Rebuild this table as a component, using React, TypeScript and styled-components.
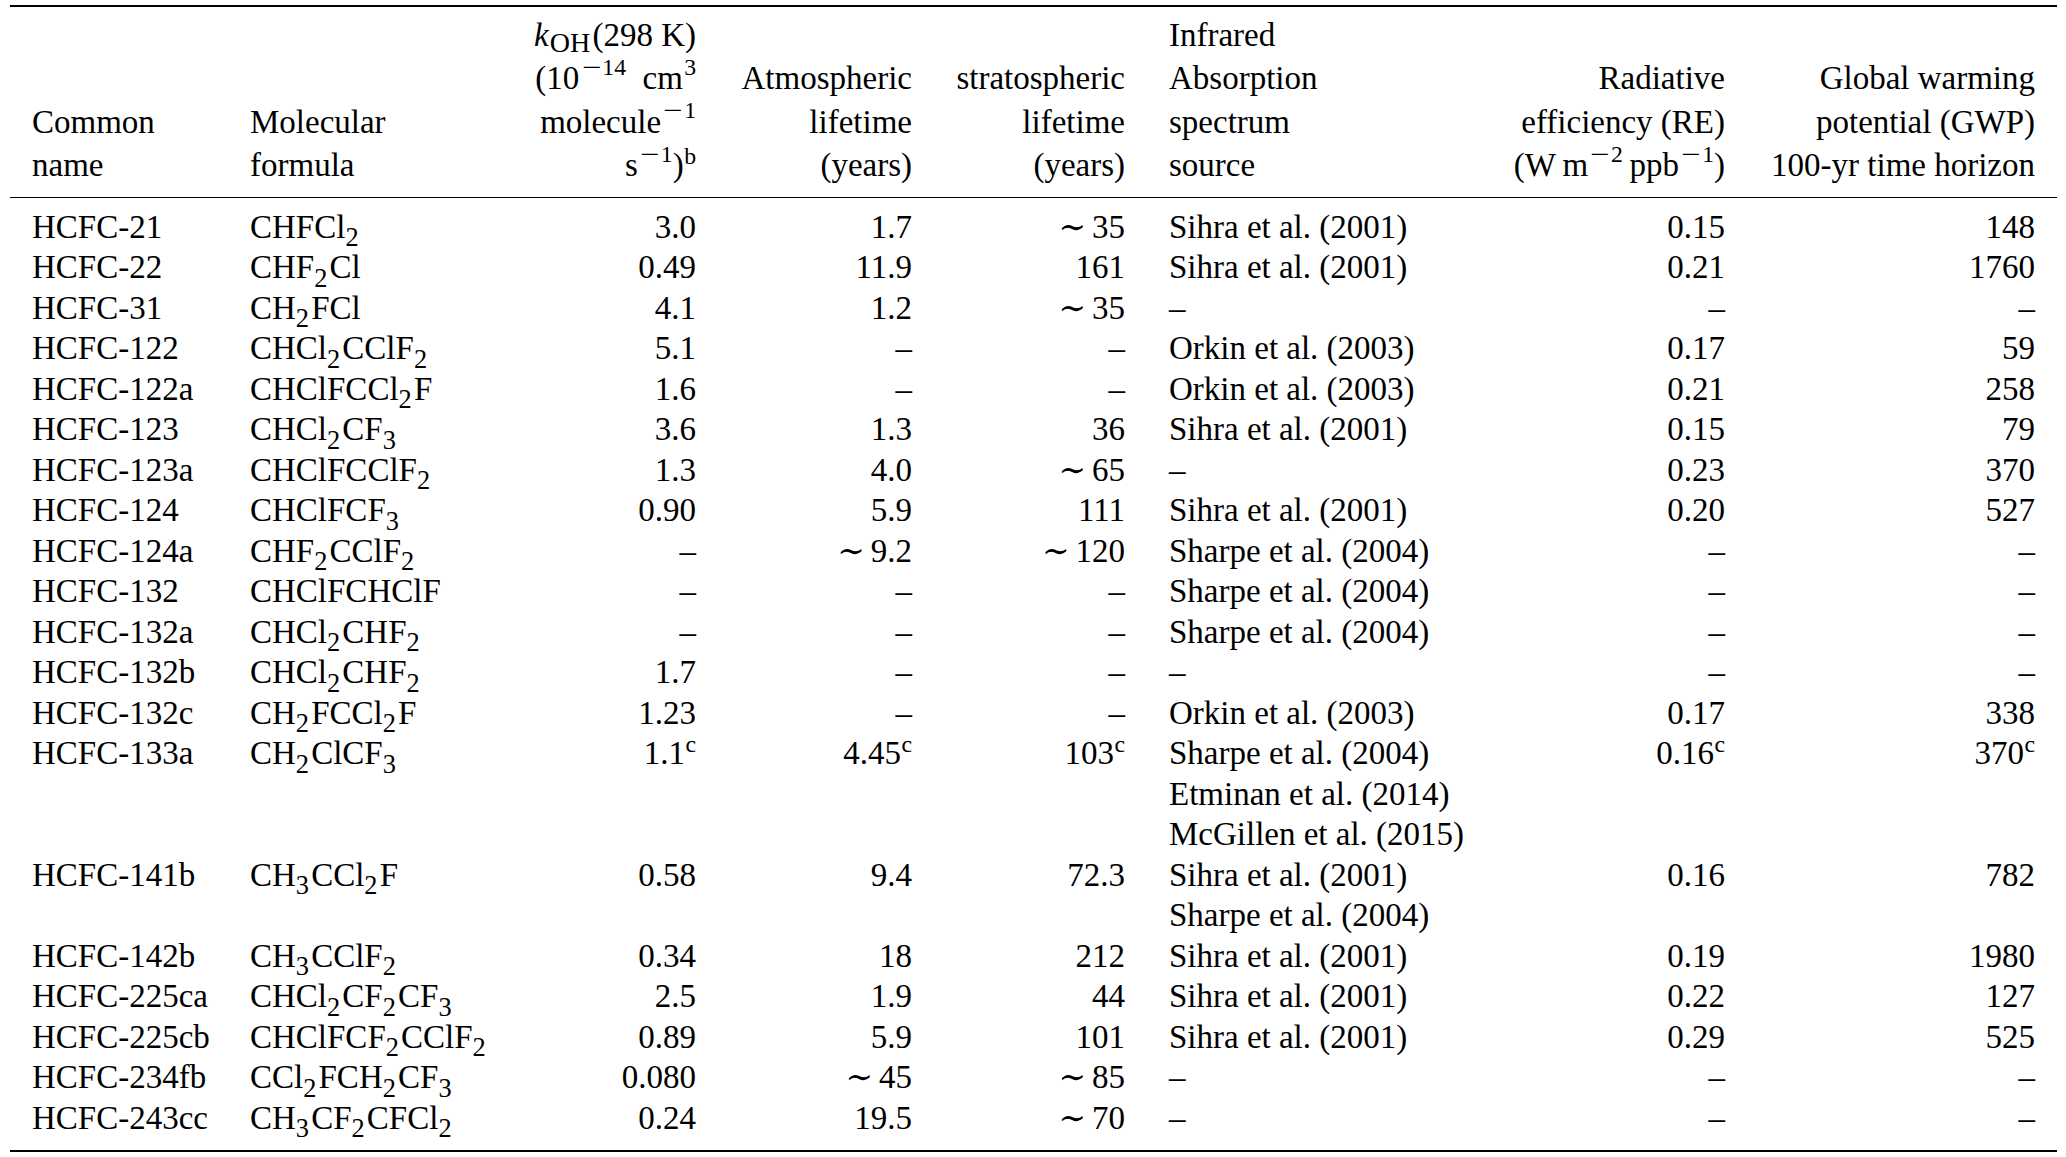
import React from "react";
import styled, { createGlobalStyle } from "styled-components";

const Global = createGlobalStyle`
  html, body { margin: 0; padding: 0; background: #ffffff; }
  body {
    font-family: "Liberation Serif", "Times New Roman", "DejaVu Serif", serif;
    color: #000;
  }
`;

type Align = "left" | "right";

const Table = styled.table`
  margin: 5px 0 0 10px;
  width: 2047px;
  table-layout: fixed;
  border-collapse: separate;
  border-spacing: 0;
  border-top: 2px solid #000;
  border-bottom: 2px solid #000;
  font-size: 33px;
`;

const Col = styled.col<{ $w: number }>`
  width: ${(p) => p.$w}px;
`;

const Th = styled.th<{ $align: Align }>`
  font-weight: normal;
  vertical-align: bottom;
  text-align: ${(p) => p.$align};
  line-height: 43.5px;
  white-space: nowrap;
  padding: 6.6px ${(p) => (p.$align === "right" ? "22px" : "0")} 9.4px
    ${(p) => (p.$align === "left" ? "22px" : "0")};
  border-bottom: 1px solid #000;
`;

const HeadLine = styled.div`
  display: block;
`;

const Td = styled.td<{ $align: Align }>`
  vertical-align: top;
  text-align: ${(p) => p.$align};
  line-height: 40.5px;
  white-space: nowrap;
  padding: 0 ${(p) => (p.$align === "right" ? "22px" : "0")} 0
    ${(p) => (p.$align === "left" ? "22px" : "0")};
  tr:first-child > & {
    padding-top: 8.6px;
  }
  tr:last-child > & {
    padding-bottom: 11.9px;
  }
`;

const SourceLine = styled.div`
  display: block;
`;

const Sub = styled.sub`
  font-size: 0.8em;
  line-height: 0;
  vertical-align: -0.32em;
  margin-right: 0.08em;
`;

const IndexSub = styled.sub`
  font-size: 0.85em;
  line-height: 0;
  vertical-align: -0.24em;
  margin: 0 0.08em 0 0.04em;
`;

const Sup = styled.sup`
  font-size: 0.72em;
  line-height: 0;
  vertical-align: 0.6em;
  margin-left: 0.05em;
`;

const Minus = styled.span`
  display: inline-block;
  width: 0.92em;
  text-align: center;
  transform: scaleX(1.45);
`;

const Note = styled.sup`
  font-size: 0.72em;
  line-height: 0;
  vertical-align: 0.52em;
  margin-left: 0.02em;
`;

const Tilde = styled.span`
  margin-right: 0.18em;
`;

const Ital = styled.i`
  font-style: italic;
`;

type Row = {
  name: string;
  formula: string;
  k: string;
  atm: string;
  strat: string;
  sources: string[];
  re: string;
  gwp: string;
};

const DASH = "\u2013";
const S01 = "Sihra et al. (2001)";
const O03 = "Orkin et al. (2003)";
const S04 = "Sharpe et al. (2004)";

const rows: Row[] = [
  { name: "HCFC-21", formula: "CHFCl2", k: "3.0", atm: "1.7", strat: "~35", sources: [S01], re: "0.15", gwp: "148" },
  { name: "HCFC-22", formula: "CHF2Cl", k: "0.49", atm: "11.9", strat: "161", sources: [S01], re: "0.21", gwp: "1760" },
  { name: "HCFC-31", formula: "CH2FCl", k: "4.1", atm: "1.2", strat: "~35", sources: [DASH], re: DASH, gwp: DASH },
  { name: "HCFC-122", formula: "CHCl2CClF2", k: "5.1", atm: DASH, strat: DASH, sources: [O03], re: "0.17", gwp: "59" },
  { name: "HCFC-122a", formula: "CHClFCCl2F", k: "1.6", atm: DASH, strat: DASH, sources: [O03], re: "0.21", gwp: "258" },
  { name: "HCFC-123", formula: "CHCl2CF3", k: "3.6", atm: "1.3", strat: "36", sources: [S01], re: "0.15", gwp: "79" },
  { name: "HCFC-123a", formula: "CHClFCClF2", k: "1.3", atm: "4.0", strat: "~65", sources: [DASH], re: "0.23", gwp: "370" },
  { name: "HCFC-124", formula: "CHClFCF3", k: "0.90", atm: "5.9", strat: "111", sources: [S01], re: "0.20", gwp: "527" },
  { name: "HCFC-124a", formula: "CHF2CClF2", k: DASH, atm: "~9.2", strat: "~120", sources: [S04], re: DASH, gwp: DASH },
  { name: "HCFC-132", formula: "CHClFCHClF", k: DASH, atm: DASH, strat: DASH, sources: [S04], re: DASH, gwp: DASH },
  { name: "HCFC-132a", formula: "CHCl2CHF2", k: DASH, atm: DASH, strat: DASH, sources: [S04], re: DASH, gwp: DASH },
  { name: "HCFC-132b", formula: "CHCl2CHF2", k: "1.7", atm: DASH, strat: DASH, sources: [DASH], re: DASH, gwp: DASH },
  { name: "HCFC-132c", formula: "CH2FCCl2F", k: "1.23", atm: DASH, strat: DASH, sources: [O03], re: "0.17", gwp: "338" },
  {
    name: "HCFC-133a",
    formula: "CH2ClCF3",
    k: "1.1^c",
    atm: "4.45^c",
    strat: "103^c",
    sources: [S04, "Etminan et al. (2014)", "McGillen et al. (2015)"],
    re: "0.16^c",
    gwp: "370^c",
  },
  { name: "HCFC-141b", formula: "CH3CCl2F", k: "0.58", atm: "9.4", strat: "72.3", sources: [S01, S04], re: "0.16", gwp: "782" },
  { name: "HCFC-142b", formula: "CH3CClF2", k: "0.34", atm: "18", strat: "212", sources: [S01], re: "0.19", gwp: "1980" },
  { name: "HCFC-225ca", formula: "CHCl2CF2CF3", k: "2.5", atm: "1.9", strat: "44", sources: [S01], re: "0.22", gwp: "127" },
  { name: "HCFC-225cb", formula: "CHClFCF2CClF2", k: "0.89", atm: "5.9", strat: "101", sources: [S01], re: "0.29", gwp: "525" },
  { name: "HCFC-234fb", formula: "CCl2FCH2CF3", k: "0.080", atm: "~45", strat: "~85", sources: [DASH], re: DASH, gwp: DASH },
  { name: "HCFC-243cc", formula: "CH3CF2CFCl2", k: "0.24", atm: "19.5", strat: "~70", sources: [DASH], re: DASH, gwp: DASH },
];

const colWidths = [218, 272, 218, 216, 213, 343, 257, 310];

function Formula({ text }: { text: string }) {
  const parts = text.split(/(\d+)/).filter((s) => s.length > 0);
  return (
    <>
      {parts.map((p, i) => (/^\d+$/.test(p) ? <Sub key={i}>{p}</Sub> : <React.Fragment key={i}>{p}</React.Fragment>))}
    </>
  );
}

function Power({ n }: { n: string }) {
  const neg = n.startsWith("-");
  return (
    <Sup>
      {neg && <Minus>{"\u2212"}</Minus>}
      {neg ? n.slice(1) : n}
    </Sup>
  );
}

function Value({ text }: { text: string }) {
  let body = text;
  let tilde = false;
  let note: string | null = null;
  if (body.startsWith("~")) {
    tilde = true;
    body = body.slice(1);
  }
  const m = body.match(/^(.*)\^(\w)$/);
  if (m) {
    body = m[1];
    note = m[2];
  }
  return (
    <>
      {tilde && <Tilde>{"\u223C"}</Tilde>}
      {body}
      {note && <Note>{note}</Note>}
    </>
  );
}

export default function App() {
  return (
    <>
      <Global />
      <Table>
        <colgroup>
          {colWidths.map((w, i) => (
            <Col key={i} $w={w} />
          ))}
        </colgroup>
        <thead>
          <tr>
            <Th $align="left">
              <HeadLine>Common</HeadLine>
              <HeadLine>name</HeadLine>
            </Th>
            <Th $align="left">
              <HeadLine>Molecular</HeadLine>
              <HeadLine>formula</HeadLine>
            </Th>
            <Th $align="right">
              <HeadLine>
                <Ital>k</Ital>
                <IndexSub>OH</IndexSub>(298 K)
              </HeadLine>
              <HeadLine>
                (10<Power n="-14" />
                {"\u2002"}cm<Power n="3" />
              </HeadLine>
              <HeadLine>
                molecule<Power n="-1" />
              </HeadLine>
              <HeadLine>
                s<Power n="-1" />)<Note>b</Note>
              </HeadLine>
            </Th>
            <Th $align="right">
              <HeadLine>Atmospheric</HeadLine>
              <HeadLine>lifetime</HeadLine>
              <HeadLine>(years)</HeadLine>
            </Th>
            <Th $align="right">
              <HeadLine>stratospheric</HeadLine>
              <HeadLine>lifetime</HeadLine>
              <HeadLine>(years)</HeadLine>
            </Th>
            <Th $align="left">
              <HeadLine>Infrared</HeadLine>
              <HeadLine>Absorption</HeadLine>
              <HeadLine>spectrum</HeadLine>
              <HeadLine>source</HeadLine>
            </Th>
            <Th $align="right">
              <HeadLine>Radiative</HeadLine>
              <HeadLine>efficiency (RE)</HeadLine>
              <HeadLine>
                (W{"\u2009"}m<Power n="-2" />
                {"\u2009"}ppb<Power n="-1" />)
              </HeadLine>
            </Th>
            <Th $align="right">
              <HeadLine>Global warming</HeadLine>
              <HeadLine>potential (GWP)</HeadLine>
              <HeadLine>100-yr time horizon</HeadLine>
            </Th>
          </tr>
        </thead>
        <tbody>
          {rows.map((r) => (
            <tr key={r.name}>
              <Td $align="left">{r.name}</Td>
              <Td $align="left">
                <Formula text={r.formula} />
              </Td>
              <Td $align="right">
                <Value text={r.k} />
              </Td>
              <Td $align="right">
                <Value text={r.atm} />
              </Td>
              <Td $align="right">
                <Value text={r.strat} />
              </Td>
              <Td $align="left">
                {r.sources.map((s, i) => (
                  <SourceLine key={i}>{s}</SourceLine>
                ))}
              </Td>
              <Td $align="right">
                <Value text={r.re} />
              </Td>
              <Td $align="right">
                <Value text={r.gwp} />
              </Td>
            </tr>
          ))}
        </tbody>
      </Table>
    </>
  );
}
